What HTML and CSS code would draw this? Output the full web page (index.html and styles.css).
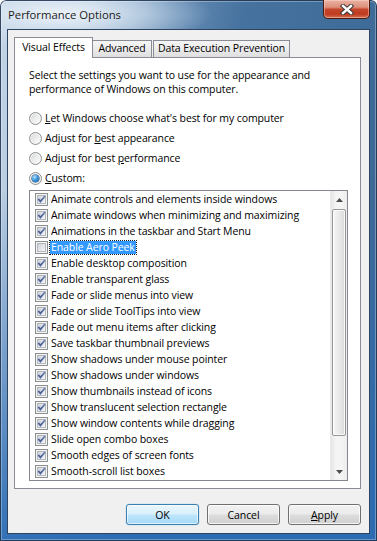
FILE: index.html
```html
<!DOCTYPE html>
<html>
<head>
<meta charset="utf-8">
<title>Performance Options</title>
<link rel="stylesheet" href="styles.css">
</head>
<body>
<svg class="defs" width="0" height="0" aria-hidden="true">
  <defs>
    <linearGradient id="cbg" x1="0" y1="0" x2="1" y2="1">
      <stop offset="0" stop-color="#cdd1d7"/>
      <stop offset="1" stop-color="#f7f7f7"/>
    </linearGradient>
    <linearGradient id="ckg" x1="0" y1="0" x2="0" y2="1">
      <stop offset="0" stop-color="#6a7fb8"/>
      <stop offset="1" stop-color="#3a4f8c"/>
    </linearGradient>
    <symbol id="box" viewBox="0 0 13 13">
      <rect x="0.5" y="0.5" width="12" height="12" fill="#f4f4f4" stroke="#8e8f8f"/>
      <rect x="2.5" y="2.5" width="8" height="8" fill="url(#cbg)" stroke="#b5b9bf"/>
    </symbol>
    <symbol id="chk" viewBox="0 0 13 13">
      <rect x="0.5" y="0.5" width="12" height="12" fill="#f4f4f4" stroke="#8e8f8f"/>
      <rect x="2.5" y="2.5" width="8" height="8" fill="url(#cbg)" stroke="#b5b9bf"/>
      <polygon points="2.6,6.4 4,5.2 5.4,7 9.6,2.4 10.6,3.5 5.5,9.8" fill="url(#ckg)"/>
    </symbol>
  </defs>
</svg>
<div class="window">
  <div class="titlebar">
    <div class="title">Performance Options</div>
    <div class="close">
      <svg width="14" height="11" viewBox="0 0 14 11">
        <path d="M3 2 L11 9 M11 2 L3 9" stroke="#3b3b3b" stroke-width="4.4" stroke-linecap="square"/>
        <path d="M3 2 L11 9 M11 2 L3 9" stroke="#ffffff" stroke-width="2.4" stroke-linecap="square"/>
      </svg>
    </div>
  </div>
  <div class="client">
    <div class="tabs">
      <div class="tab selected w-ve">Visual Effects</div>
      <div class="tab w-adv">Advanced</div>
      <div class="tab w-dep">Data Execution Prevention</div>
    </div>
    <div class="panel">
      <p class="desc">Select the settings you want to use for the appearance and<br>performance of Windows on this computer.</p>
      <div class="radios">
        <div class="radio-row"><span class="radio"></span><span class="rlabel"><u>L</u>et Windows choose what's best for my computer</span></div>
        <div class="radio-row"><span class="radio"></span><span class="rlabel">Adjust for <u>b</u>est appearance</span></div>
        <div class="radio-row"><span class="radio"></span><span class="rlabel">Adjust for best <u>p</u>erformance</span></div>
        <div class="radio-row"><span class="radio on"></span><span class="rlabel"><u>C</u>ustom:</span></div>
      </div>
      <div class="list">
        <div class="items">
          <div class="item"><svg class="cb"><use href="#chk"/></svg><span class="lbl">Animate controls and elements inside windows</span></div>
          <div class="item"><svg class="cb"><use href="#chk"/></svg><span class="lbl">Animate windows when minimizing and maximizing</span></div>
          <div class="item"><svg class="cb"><use href="#chk"/></svg><span class="lbl">Animations in the taskbar and Start Menu</span></div>
          <div class="item"><svg class="cb"><use href="#box"/></svg><span class="lbl sel">Enable Aero Peek</span></div>
          <div class="item"><svg class="cb"><use href="#chk"/></svg><span class="lbl">Enable desktop composition</span></div>
          <div class="item"><svg class="cb"><use href="#chk"/></svg><span class="lbl">Enable transparent glass</span></div>
          <div class="item"><svg class="cb"><use href="#chk"/></svg><span class="lbl">Fade or slide menus into view</span></div>
          <div class="item"><svg class="cb"><use href="#chk"/></svg><span class="lbl">Fade or slide ToolTips into view</span></div>
          <div class="item"><svg class="cb"><use href="#chk"/></svg><span class="lbl">Fade out menu items after clicking</span></div>
          <div class="item"><svg class="cb"><use href="#chk"/></svg><span class="lbl">Save taskbar thumbnail previews</span></div>
          <div class="item"><svg class="cb"><use href="#chk"/></svg><span class="lbl">Show shadows under mouse pointer</span></div>
          <div class="item"><svg class="cb"><use href="#chk"/></svg><span class="lbl">Show shadows under windows</span></div>
          <div class="item"><svg class="cb"><use href="#chk"/></svg><span class="lbl">Show thumbnails instead of icons</span></div>
          <div class="item"><svg class="cb"><use href="#chk"/></svg><span class="lbl">Show translucent selection rectangle</span></div>
          <div class="item"><svg class="cb"><use href="#chk"/></svg><span class="lbl">Show window contents while dragging</span></div>
          <div class="item"><svg class="cb"><use href="#chk"/></svg><span class="lbl">Slide open combo boxes</span></div>
          <div class="item"><svg class="cb"><use href="#chk"/></svg><span class="lbl">Smooth edges of screen fonts</span></div>
          <div class="item"><svg class="cb"><use href="#chk"/></svg><span class="lbl">Smooth-scroll list boxes</span></div>
        </div>
        <div class="scrollbar">
          <div class="sb-btn">
            <svg width="7" height="4" viewBox="0 0 7 4"><polygon points="0,4 3.5,0 7,4" fill="#4d4d4d"/></svg>
          </div>
          <div class="sb-track"><div class="thumb"></div></div>
          <div class="sb-btn">
            <svg width="7" height="4" viewBox="0 0 7 4"><polygon points="0,0 7,0 3.5,4" fill="#4d4d4d"/></svg>
          </div>
        </div>
      </div>
    </div>
    <div class="buttons">
      <div class="btn default">OK</div>
      <div class="btn">Cancel</div>
      <div class="btn"><u>A</u>pply</div>
    </div>
  </div>
</div>
</body>
</html>
```

FILE: styles.css
```css
* { box-sizing: border-box; }

html, body {
  margin: 0;
  padding: 0;
  background: #ffffff;
}

body {
  width: 377px;
  height: 541px;
  overflow: hidden;
  font-family: "Open Sans", "Noto Sans", sans-serif;
  font-size: 10.5px;
  letter-spacing: -0.1px;
  color: #000;
}

.defs {
  position: absolute;
  width: 0;
  height: 0;
}

.window {
  width: 377px;
  height: 541px;
  display: flex;
  flex-direction: column;
  padding: 0 7px 7px 7px;
  border-radius: 6px 6px 0 0;
  background:
    radial-gradient(ellipse 150px 34px at 62px 14px, rgba(238,244,250,0.95) 0%, rgba(214,228,241,0.6) 55%, rgba(214,228,241,0) 100%),
    linear-gradient(to bottom, rgba(44,108,180,0) 35%, rgba(44,108,180,0.95) 100%),
    linear-gradient(100deg, #c3d4e6 0%, #afc5dc 18%, #6a90b7 36%, #46729f 52%, #3a6694 100%);
  box-shadow: inset 0 0 0 1px rgba(22,44,72,0.85), inset 0 0 0 2px rgba(255,255,255,0.3);
}

.titlebar {
  height: 29px;
  display: flex;
  align-items: flex-start;
  justify-content: space-between;
}

.title {
  margin: 7px 0 0 1px;
  font-size: 11.3px;
  letter-spacing: 0;
  line-height: 16px;
  color: #1b1b1b;
}

.close {
  width: 47px;
  height: 19px;
  border: 1px solid #4a1a10;
  border-top: none;
  border-radius: 0 0 5px 5px;
  background: linear-gradient(to bottom, #eab3a4 0%, #dd8f7a 40%, #c5462c 52%, #bf3a20 78%, #d4734f 100%);
  box-shadow: inset 0 0 0 1px rgba(255,220,210,0.45);
  display: flex;
  align-items: center;
  justify-content: center;
}

.client {
  flex: 1;
  display: flex;
  flex-direction: column;
  padding: 7px 8px 0 6px;
  background: #f0f0f0;
  border: 1px solid #2c4460;
}

.tabs {
  display: flex;
  align-items: flex-end;
  height: 20px;
}

.tab {
  height: 17px;
  border: 1px solid #898c95;
  border-bottom: none;
  background: linear-gradient(to bottom, #f5f5f5 0%, #ececec 50%, #dedede 100%);
  line-height: 15px;
  text-align: center;
  white-space: nowrap;
}

.tab.selected {
  height: 21px;
  margin-bottom: -1px;
  padding-top: 2px;
  background: #ffffff;
  position: relative;
  z-index: 1;
}

.w-ve { width: 79px; }
.w-adv { width: 59px; border-left: none; }
.w-dep { width: 137px; margin-left: 1px; }

.panel {
  height: 432px;
  border: 1px solid #898c95;
  background: #ffffff;
  padding: 10px 12px 0 14px;
}

.desc {
  margin: 0;
  line-height: 14px;
}

.radios {
  margin-top: 12px;
}

.radio-row {
  height: 20px;
  display: flex;
  align-items: center;
}

.radio {
  width: 13px;
  height: 13px;
  border-radius: 50%;
  border: 1px solid #8e8f8f;
  background: linear-gradient(135deg, #d3d5d9 0%, #f0f0f0 60%, #fdfdfd 100%);
  box-shadow: inset 0 0 0 1px #f4f4f4;
  display: flex;
  align-items: center;
  justify-content: center;
  flex: none;
}

.radio.on::after {
  content: "";
  width: 7px;
  height: 7px;
  border-radius: 50%;
  background: radial-gradient(circle at 35% 30%, #b5e2fc 0%, #3d9ae0 45%, #0f4f93 100%);
  box-shadow: 0 0 0 0.5px #0b3f7a;
}

.rlabel {
  margin-left: 3px;
  line-height: 14px;
}

.list {
  margin-top: 2px;
  width: 319px;
  height: 291px;
  border: 1px solid #828790;
  display: flex;
  background: #ffffff;
}

.items {
  flex: 1;
  padding-left: 5px;
}

.item {
  height: 16px;
  display: flex;
  align-items: center;
}

.cb {
  width: 13px;
  height: 13px;
  flex: none;
}

.lbl {
  margin-left: 2px;
  padding: 0 1px;
  line-height: 13px;
  white-space: nowrap;
}

.lbl.sel {
  background: #3399ff;
  color: #ffffff;
  outline: 1px dotted #1a1a1a;
  outline-offset: 0;
}

.scrollbar {
  width: 17px;
  display: flex;
  flex-direction: column;
  background: linear-gradient(to right, #e6e6e6 0%, #f4f4f4 30%, #f4f4f4 70%, #ececec 100%);
  border-left: 1px solid #eaeaea;
}

.sb-btn {
  height: 17px;
  display: flex;
  align-items: center;
  justify-content: center;
  flex: none;
}

.sb-track {
  flex: 1;
  padding: 1px 1px 0 1px;
}

.thumb {
  height: 227px;
  border: 1px solid #979797;
  border-radius: 2px;
  background: linear-gradient(to right, #f6f6f6 0%, #eaeaea 50%, #d9d9d9 100%);
  box-shadow: inset 0 0 0 1px rgba(255,255,255,0.8);
}

.buttons {
  margin-top: 15px;
  display: flex;
  justify-content: flex-end;
  gap: 8px;
}

.btn {
  width: 73px;
  height: 21px;
  border: 1px solid #707070;
  border-radius: 3px;
  background: linear-gradient(to bottom, #f2f2f2 0%, #ebebeb 48%, #dddddd 52%, #cfcfcf 100%);
  box-shadow: inset 0 0 0 1px rgba(255,255,255,0.75);
  display: flex;
  align-items: center;
  justify-content: center;
  line-height: 14px;
}

.btn.default {
  border-color: #3c7fb1;
  background: linear-gradient(to bottom, #eaf6fd 0%, #d9f0fc 48%, #bee6fd 52%, #a7d9f5 100%);
  box-shadow: inset 0 0 0 1px rgba(255,255,255,0.6), 0 0 1px 0 #5fb3e8;
}
```
